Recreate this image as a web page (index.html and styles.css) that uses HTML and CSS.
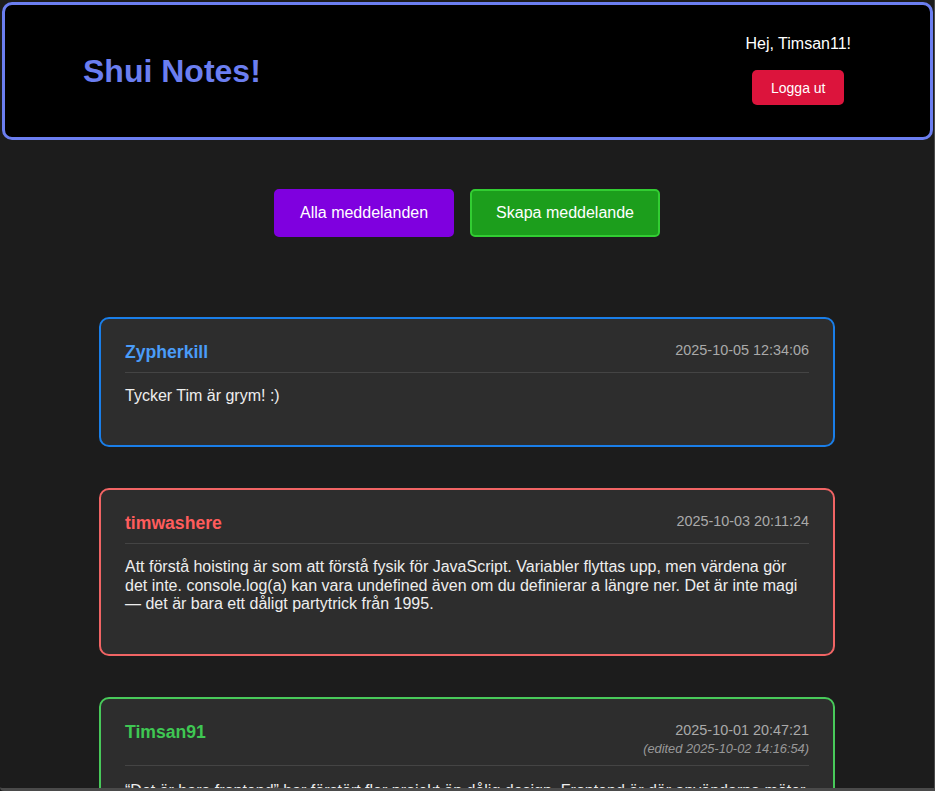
FILE: index.html
```html
<!DOCTYPE html>
<html lang="sv">
<head>
<meta charset="utf-8">
<title>Shui Notes!</title>
<link rel="stylesheet" href="styles.css">
</head>
<body>
<div class="frame">
  <header class="site-header">
    <h1 class="logo">Shui Notes!</h1>
    <div class="user-box">
      <p class="greeting">Hej, Timsan11!</p>
      <button class="btn-logout">Logga ut</button>
    </div>
  </header>

  <nav class="nav">
    <button class="nav-btn nav-all">Alla meddelanden</button>
    <button class="nav-btn nav-create">Skapa meddelande</button>
  </nav>

  <main class="notes">
    <article class="note note-blue">
      <div class="note-head">
        <h3 class="note-user">Zypherkill</h3>
        <div class="note-meta">
          <span class="note-date">2025-10-05 12:34:06</span>
        </div>
      </div>
      <p class="note-text">Tycker Tim är grym! :)</p>
    </article>

    <article class="note note-red">
      <div class="note-head">
        <h3 class="note-user">timwashere</h3>
        <div class="note-meta">
          <span class="note-date">2025-10-03 20:11:24</span>
        </div>
      </div>
      <p class="note-text">Att förstå hoisting är som att förstå fysik för JavaScript. Variabler flyttas upp, men värdena gör det inte. console.log(a) kan vara undefined även om du definierar a längre ner. Det är inte magi — det är bara ett dåligt partytrick från 1995.</p>
    </article>

    <article class="note note-green">
      <div class="note-head">
        <h3 class="note-user">Timsan91</h3>
        <div class="note-meta">
          <span class="note-date">2025-10-01 20:47:21</span>
          <span class="note-edited">(edited 2025-10-02 14:16:54)</span>
        </div>
      </div>
      <p class="note-text note-text-late">“Det är bara frontend” har förstört fler projekt än dålig design. Frontend är där användarna möter hela UX:en, och där varje liten detalj märks direkt.</p>
    </article>
  </main>
</div>
</body>
</html>
```
FILE: styles.css
```css
* { box-sizing: border-box; }

html, body {
  margin: 0;
  padding: 0;
  background: #1c1c1c;
}

body {
  font-family: "Liberation Sans", Arial, sans-serif;
  color: #eeeeee;
}

.frame {
  height: 100vh;
  overflow: hidden;
  border-right: 1px solid #4a4a4a;
  border-bottom: 3px solid #4a4a4a;
  border-bottom-left-radius: 4px;
  background: #1c1c1c;
}

.site-header {
  margin: 2px 1px 0 2px;
  height: 138px;
  background: #000;
  border: 3px solid #6b7ef0;
  border-radius: 10px;
  padding: 0 79px 0 78px;
  display: flex;
  justify-content: space-between;
  align-items: center;
}

.logo {
  margin: 0;
  font-size: 32px;
  font-weight: bold;
  color: #6b7ef0;
}

.user-box {
  display: flex;
  flex-direction: column;
  align-items: center;
  gap: 17px;
  margin-top: -2px;
}

.greeting {
  margin: 0;
  font-size: 16px;
  color: #ffffff;
}

.btn-logout {
  font-family: inherit;
  font-size: 14px;
  color: #fff;
  background: #dc143c;
  border: none;
  border-radius: 5px;
  width: 92px;
  height: 35px;
  padding: 0;
}

.nav {
  display: flex;
  justify-content: center;
  gap: 16px;
  margin-top: 49px;
}

.nav-btn {
  font-family: inherit;
  font-size: 16px;
  color: #fff;
  border-radius: 5px;
  padding: 13px 24px;
  line-height: 18px;
  border: 2px solid transparent;
}

.nav-all {
  background: #7f00df;
  border-color: #7f00df;
}

.nav-create {
  background: #1c9e1c;
  border-color: #32cd32;
}

.notes {
  max-width: 736px;
  margin: 80px auto 0;
  display: flex;
  flex-direction: column;
  gap: 41px;
}

.note {
  background: #2d2d2d;
  border: 2px solid;
  border-radius: 10px;
  padding: 22px 24px 24px;
}

.note-blue { border-color: #1a7ee8; }
.note-blue .note-user { color: #4a9cf8; }
.note-red { border-color: #f06464; }
.note-red .note-user { color: #ff5c5c; }
.note-green { border-color: #48c95a; }
.note-green .note-user { color: #3fc753; }

.note-head {
  display: flex;
  justify-content: space-between;
  align-items: flex-start;
  padding-bottom: 9px;
  border-bottom: 1px solid #444444;
  margin-bottom: 14px;
}

.note-user {
  margin: 0;
  font-size: 17.6px;
  font-weight: bold;
  line-height: 22px;
}

.note-meta {
  display: flex;
  flex-direction: column;
  align-items: flex-end;
  padding-top: 1px;
}

.note-date {
  font-size: 14.4px;
  color: #aaaaaa;
}

.note-edited {
  font-size: 12.8px;
  font-style: italic;
  color: #999999;
  margin-top: 3px;
}

.note-text {
  margin: 0 0 16px;
  font-size: 16px;
  line-height: 18.4px;
  color: #eeeeee;
}

.note-text-late {
  padding-top: 2px;
}
```
